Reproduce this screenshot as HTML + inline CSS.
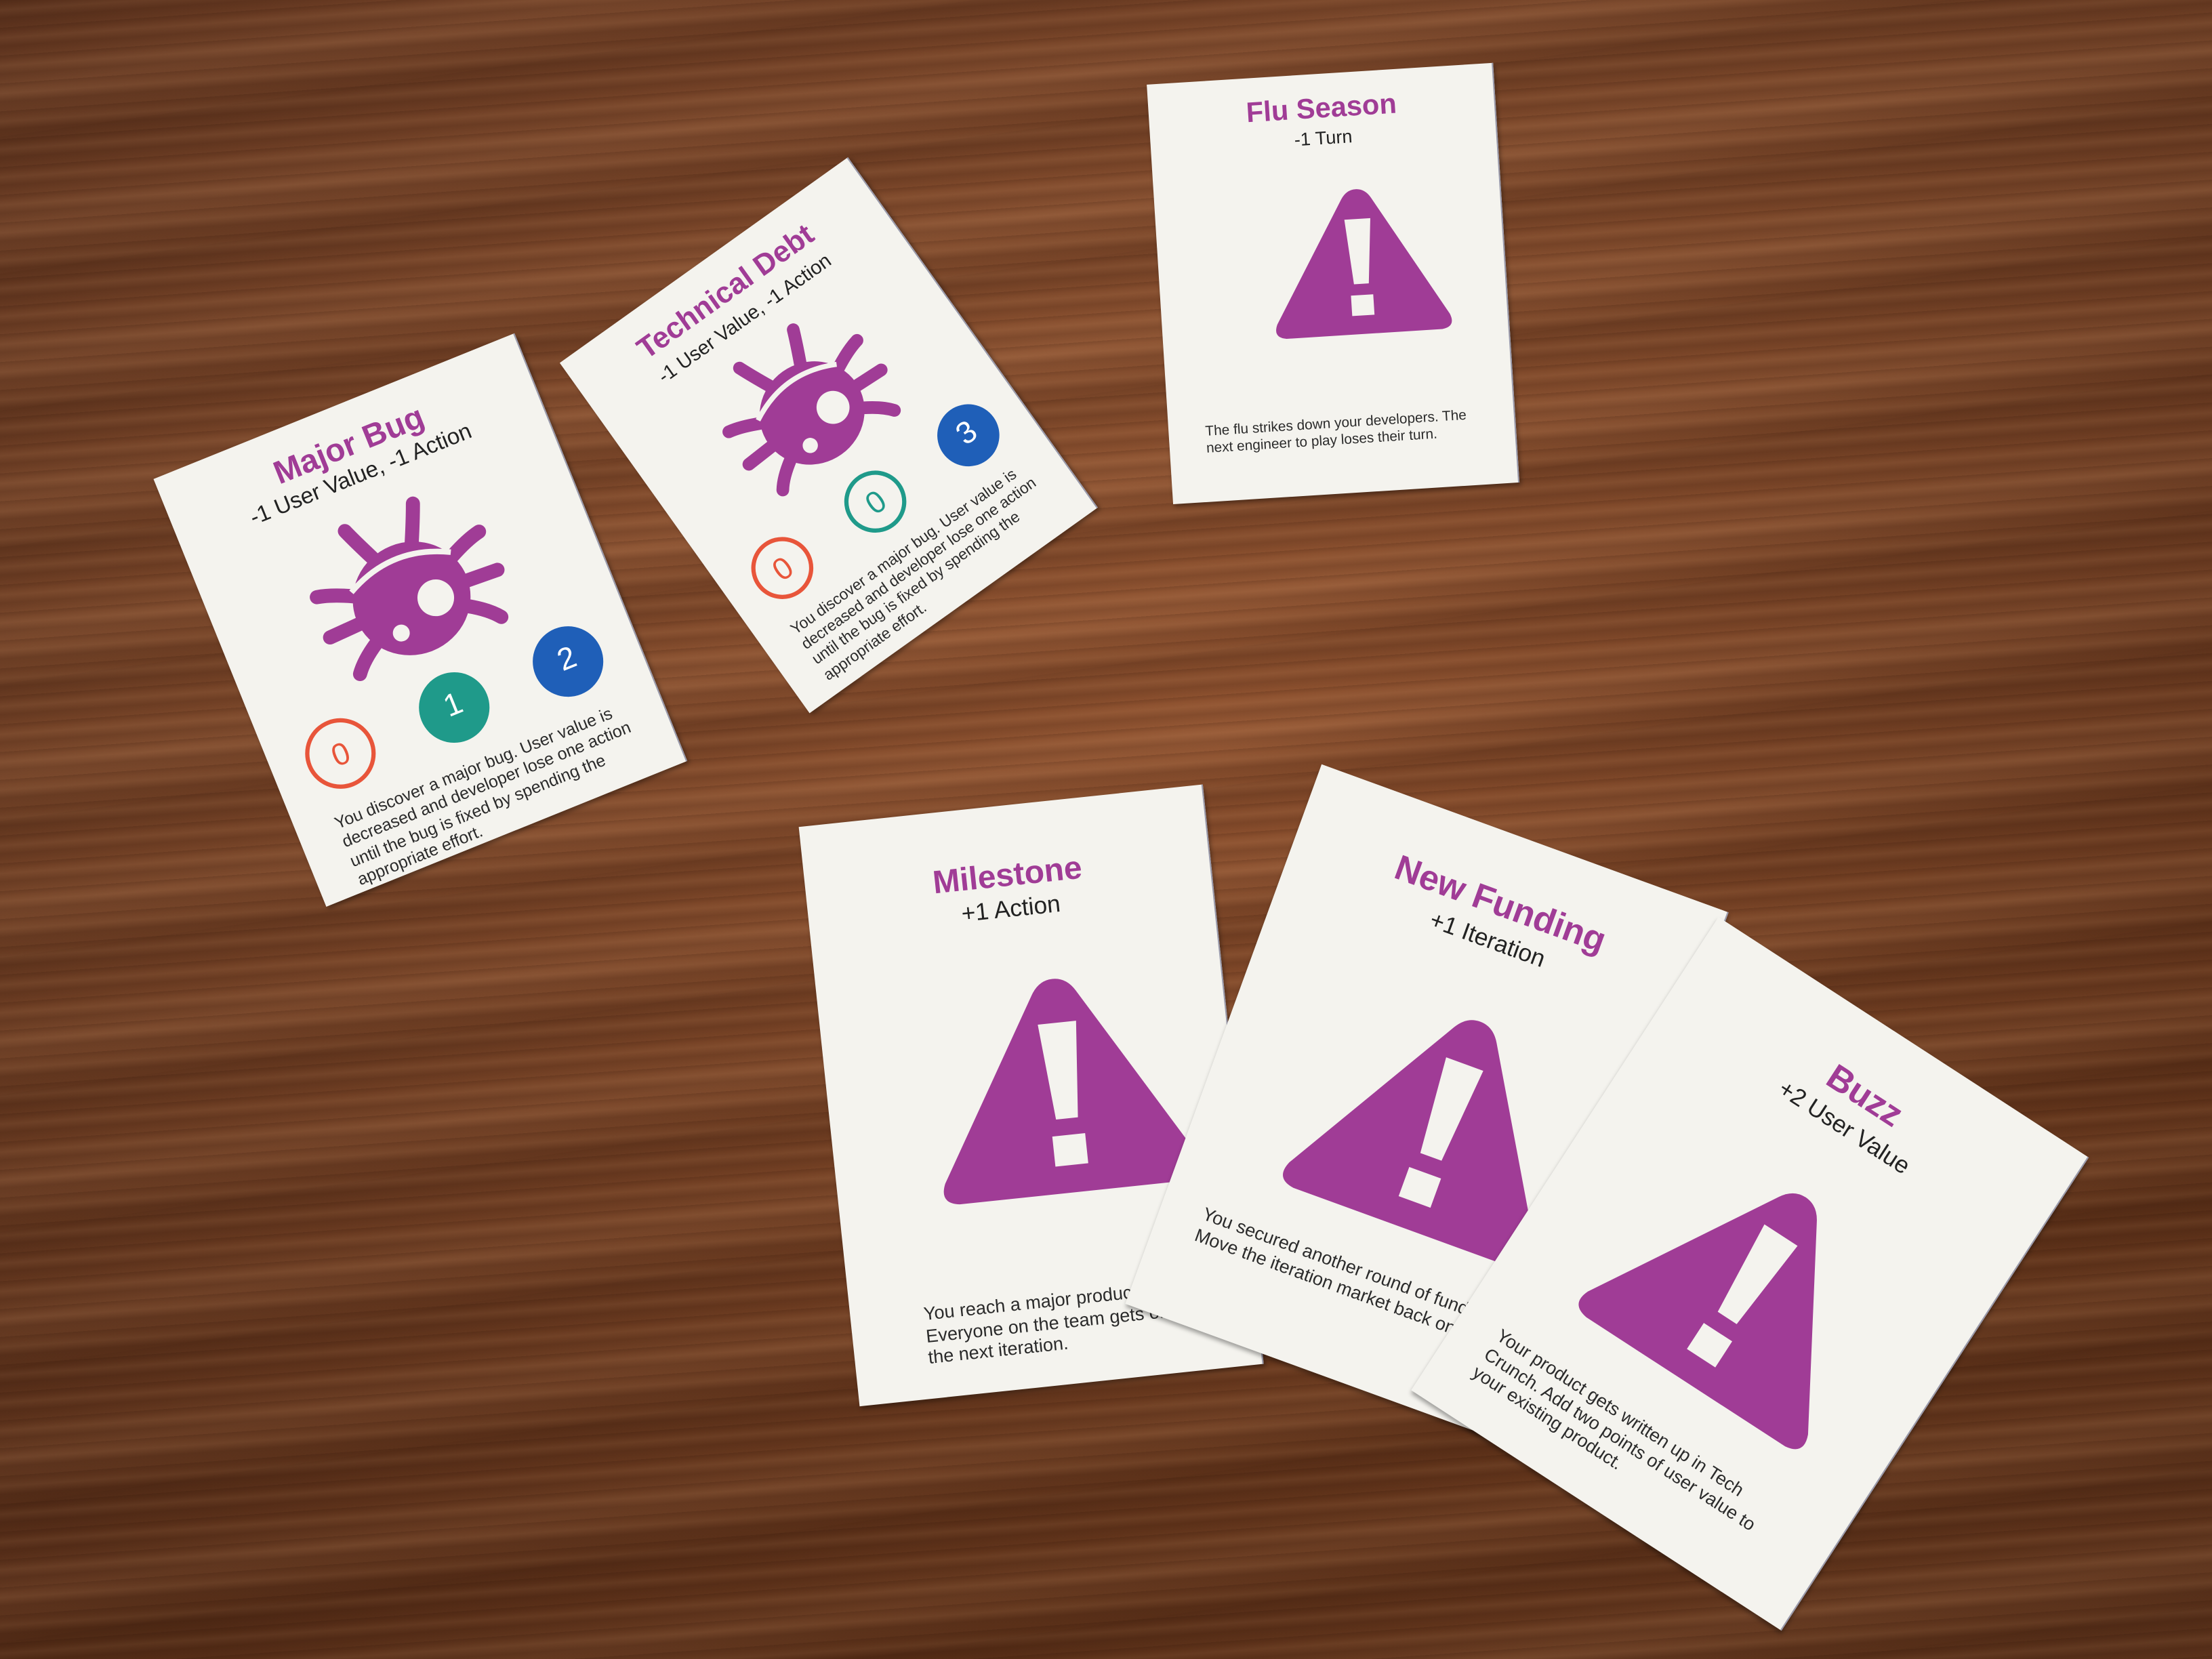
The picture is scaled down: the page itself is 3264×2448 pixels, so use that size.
<!DOCTYPE html>
<html><head><meta charset="utf-8">
<style>
html,body{margin:0;padding:0;}
body{width:3264px;height:2448px;overflow:hidden;
background:
repeating-linear-gradient(176deg,rgba(40,15,5,0.16) 0px,rgba(40,15,5,0) 7px,rgba(255,200,150,0.06) 15px,rgba(40,15,5,0.12) 27px,rgba(0,0,0,0) 41px),
repeating-linear-gradient(172deg,rgba(30,10,0,0.14) 0px,rgba(30,10,0,0) 70px,rgba(255,190,140,0.08) 130px,rgba(30,10,0,0.1) 200px),
radial-gradient(ellipse at 55% 45%,rgba(255,170,110,0.12),rgba(0,0,0,0.25) 90%),
linear-gradient(160deg,#82482a 0%,#8a4e2d 30%,#7a4224 55%,#6e391c 80%,#7a4324 100%);}
#s{position:absolute;left:0;top:0;width:1568px;height:1176px;transform:scale(2.0816);transform-origin:0 0;}
.c{position:absolute;background:#f4f3ee;box-shadow:1px 2px 3px rgba(0,0,0,0.35);font-family:"Liberation Sans",sans-serif;color:#2a2a2a;border-right:1px solid #99a;}
.t{position:absolute;left:0;right:0;text-align:center;color:#a03c96;font-weight:bold;}
.st{position:absolute;left:0;right:0;text-align:center;color:#222;}
.tx{position:absolute;line-height:1.2;color:#2b2b2b;}
.ci{position:absolute;width:50px;height:50px;border-radius:50%;box-sizing:border-box;text-align:center;line-height:46px;font-size:22px;}
</style></head><body><div id="s">

<svg width="0" height="0" style="position:absolute">
<defs>
<symbol id="tri" viewBox="0 0 200 170">
<path d="M100 8 Q110 8 116 18 L193 148 Q199 162 184 164 L16 164 Q1 162 7 148 L84 18 Q90 8 100 8Z" fill="#a03c96"/>
<path d="M86 40 L114 40 L108 110 L92 110Z" fill="#f4f3ee"/>
<rect x="88" y="122" width="24" height="22" fill="#f4f3ee"/>
</symbol>
<symbol id="bug" viewBox="0 0 140 120">
<g stroke="#a03c96" stroke-width="10" stroke-linecap="round" fill="none">
<path d="M55 35 Q48 20 44 10"/><path d="M85 35 Q92 20 96 10"/>
<path d="M32 55 Q18 48 8 46"/><path d="M28 75 L6 76"/><path d="M35 92 Q22 100 16 108"/>
<path d="M108 55 Q122 48 132 46"/><path d="M112 75 L134 76"/><path d="M105 92 Q118 100 124 108"/>
</g>
<ellipse cx="70" cy="72" rx="42" ry="40" fill="#a03c96"/>
<path d="M32 52 Q70 32 108 52" stroke="#f4f3ee" stroke-width="4" fill="none"/>
<circle cx="86" cy="78" r="13" fill="#f4f3ee"/>
<circle cx="54" cy="92" r="6" fill="#f4f3ee"/>
</symbol>
</defs></svg>

<!-- Major Bug -->
<div class="c" style="left:160px;top:276px;width:275px;height:327px;transform:rotate(-22deg);">
<div class="t" style="top:16px;font-size:23px;">Major Bug</div>
<div class="st" style="top:44px;font-size:16px;">-1 User Value, -1 Action</div>
<svg style="position:absolute;left:68px;top:75px" width="140" height="120"><use href="#bug"/></svg>
<div class="ci" style="left:25px;top:205px;border:3px solid #e8553a;color:#e8553a;">0</div>
<div class="ci" style="left:112px;top:205px;background:#1f9a8a;color:#fff;">1</div>
<div class="ci" style="left:199px;top:205px;background:#1f5fb8;color:#fff;">2</div>
<div class="tx" style="left:28px;top:268px;width:225px;font-size:12px;">You discover a major bug. User value is decreased and developer lose one action until the bug is fixed by spending the appropriate effort.</div>
</div>

<!-- Technical Debt -->
<div class="c" style="left:462px;top:156px;width:250px;height:305px;transform:rotate(-35.5deg);">
<div class="t" style="top:16px;font-size:21px;">Technical Debt</div>
<div class="st" style="top:42px;font-size:14px;">-1 User Value, -1 Action</div>
<svg style="position:absolute;left:62px;top:68px" width="126" height="108"><use href="#bug"/></svg>
<div class="ci" style="left:22px;top:188px;width:44px;height:44px;line-height:40px;border:3px solid #e8553a;color:#e8553a;">0</div>
<div class="ci" style="left:103px;top:188px;width:44px;height:44px;line-height:40px;border:3px solid #1f9a8a;color:#1f9a8a;">0</div>
<div class="ci" style="left:184px;top:188px;width:44px;height:44px;line-height:40px;background:#1f5fb8;color:#fff;">3</div>
<div class="tx" style="left:24px;top:245px;width:205px;font-size:11px;">You discover a major bug. User value is decreased and developer lose one action until the bug is fixed by spending the appropriate effort.</div>
</div>

<!-- Flu Season -->
<div class="c" style="left:822px;top:52px;width:245px;height:298px;transform:rotate(-3.6deg);">
<div class="t" style="top:14px;font-size:20px;">Flu Season</div>
<div class="st" style="top:38px;font-size:13px;">-1 Turn</div>
<svg style="position:absolute;left:62px;top:78px" width="162" height="112"><use href="#tri"/></svg>
<div class="tx" style="left:26px;top:243px;width:200px;font-size:10px;">The flu strikes down your developers. The next engineer to play loses their turn.</div>
</div>

<!-- Milestone -->
<div class="c" style="left:587px;top:570px;width:287px;height:413px;transform:rotate(-6deg);">
<div class="t" style="top:36px;font-size:23px;">Milestone</div>
<div class="st" style="top:64px;font-size:17px;">+1 Action</div>
<svg style="position:absolute;left:70px;top:118px" width="195" height="166"><use href="#tri"/></svg>
<div class="tx" style="left:52px;top:345px;width:225px;font-size:13px;">You reach a major product milestone. Everyone on the team gets one action the next iteration.</div>
</div>

<!-- New Funding -->
<div class="c" style="left:858px;top:582px;width:306px;height:407px;transform:rotate(20deg);">
<div class="t" style="top:36px;font-size:25px;">New Funding</div>
<div class="st" style="top:67px;font-size:17px;">+1 Iteration</div>
<svg style="position:absolute;left:68px;top:125px" width="200" height="170"><use href="#tri"/></svg>
<div class="tx" style="left:30px;top:320px;width:250px;font-size:13px;">You secured another round of funding. Move the iteration market back one step.</div>
</div>

<!-- Buzz -->
<div class="c" style="left:1084px;top:703px;width:312px;height:400px;transform:rotate(33deg);">
<div class="t" style="top:36px;font-size:25px;">Buzz</div>
<div class="st" style="top:67px;font-size:17px;">+2 User Value</div>
<svg style="position:absolute;left:60px;top:125px" width="200" height="170"><use href="#tri"/></svg>
<div class="tx" style="left:30px;top:325px;width:255px;font-size:13px;">Your product gets written up in Tech Crunch. Add two points of user value to your existing product.</div>
</div>

</div></body></html>
